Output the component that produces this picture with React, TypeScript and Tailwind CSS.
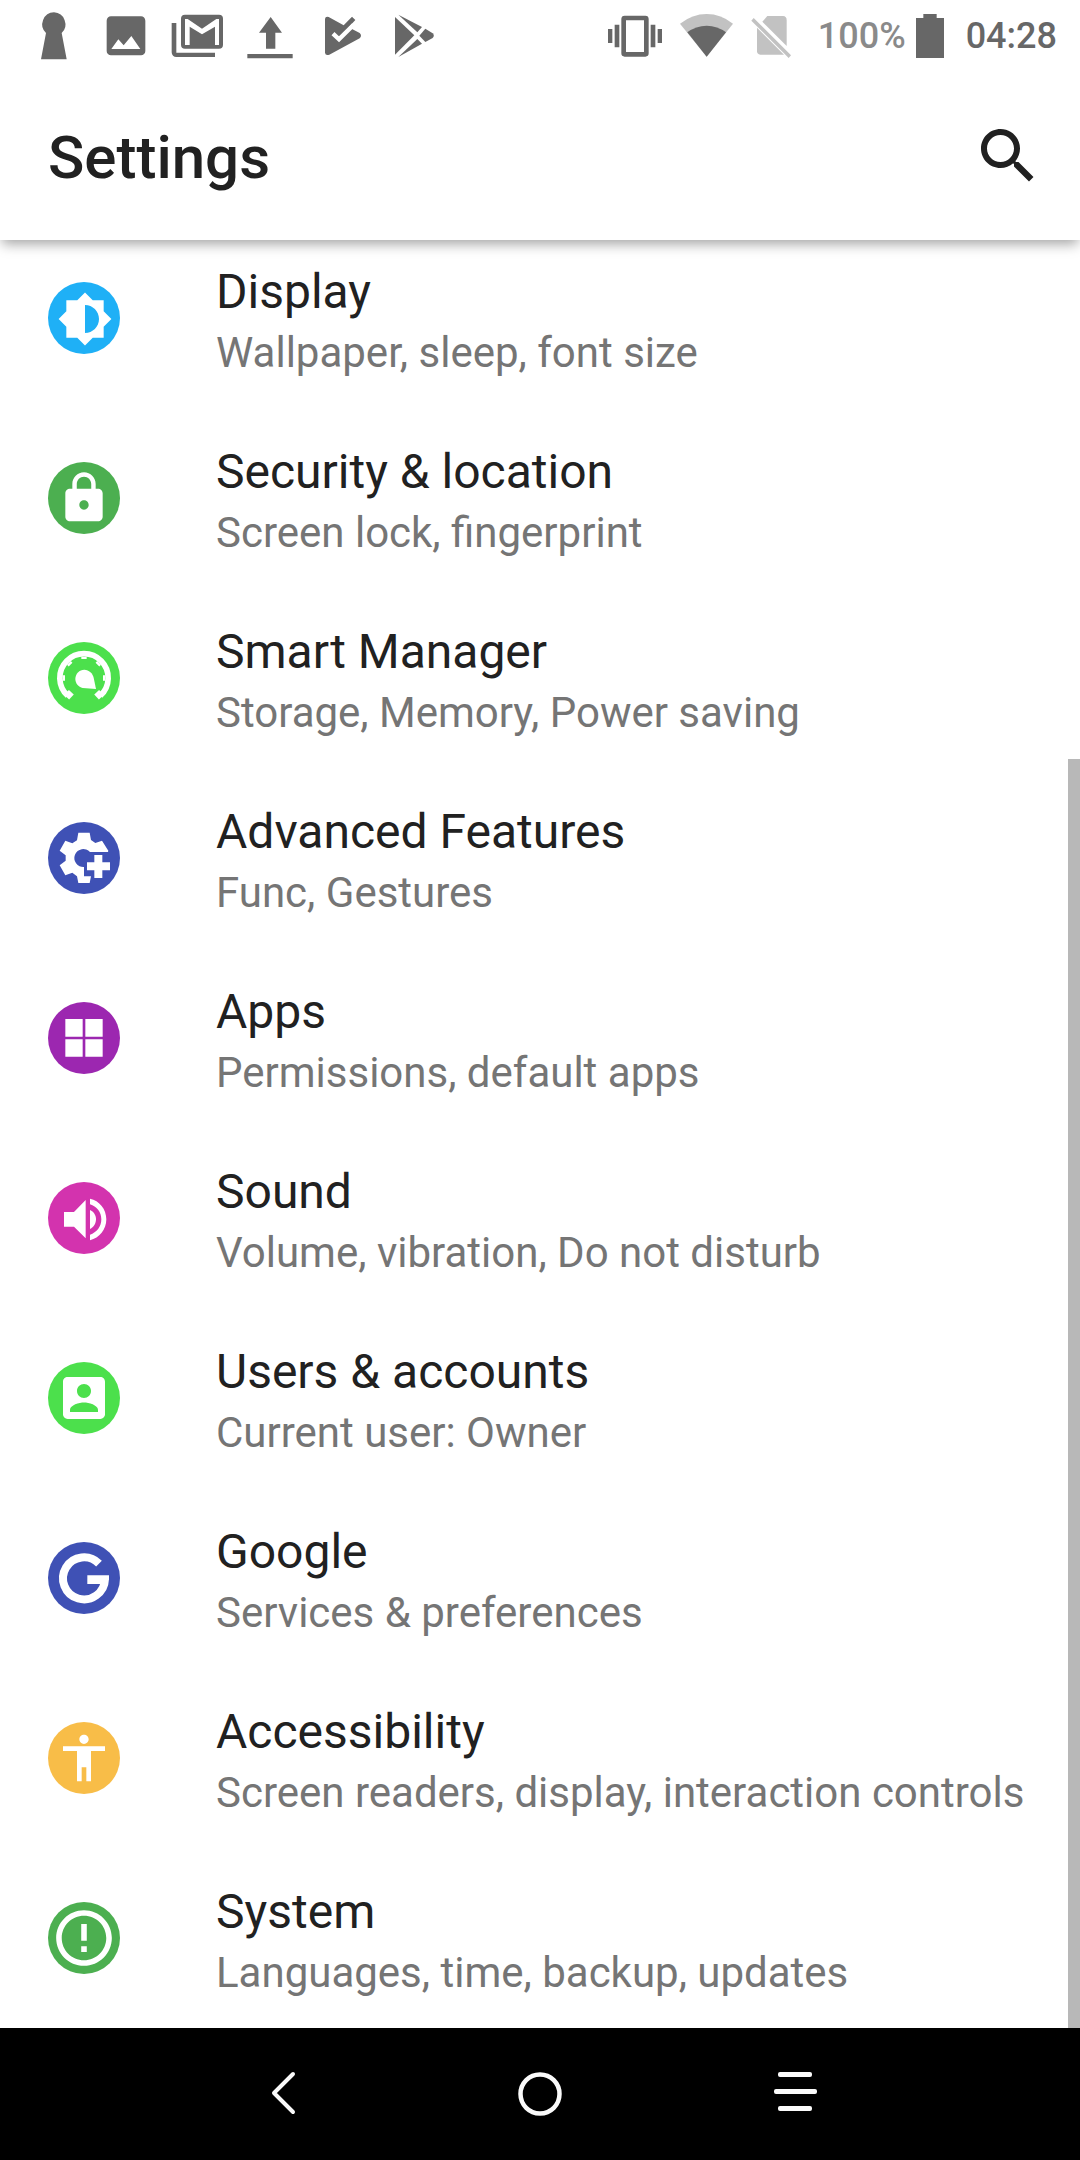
import type { ReactNode } from "react";

const BRIGHTNESS =
  "M20 15.31L23.31 12 20 8.69V4h-4.69L12 .69 8.69 4H4v4.69L.69 12 4 15.31V20h4.69L12 23.31 15.31 20H20v-4.69zM12 18V6c3.31 0 6 2.69 6 6s-2.69 6-6 6z";
const LOCK =
  "M18 8h-1V6c0-2.76-2.24-5-5-5S7 3.24 7 6v2H6c-1.1 0-2 .9-2 2v10c0 1.1.9 2 2 2h12c1.1 0 2-.9 2-2V10c0-1.1-.9-2-2-2zm-6 9c-1.1 0-2-.9-2-2s.9-2 2-2 2 .9 2 2-.9 2-2 2zm3.1-9H8.9V6c0-1.71 1.39-3.1 3.1-3.1 1.71 0 3.1 1.39 3.1 3.1v2z";
const ACCOUNT =
  "M3 5v14c0 1.1.89 2 2 2h14c1.1 0 2-.9 2-2V5c0-1.1-.9-2-2-2H5c-1.11 0-2 .9-2 2zm12 4c0 1.66-1.34 3-3 3s-3-1.34-3-3 1.34-3 3-3 3 1.34 3 3zm-9 8c0-2 4-3.1 6-3.1s6 1.1 6 3.1v1H6v-1z";
const PERSON =
  "M12 2c1.1 0 2 .9 2 2s-.9 2-2 2-2-.9-2-2 .9-2 2-2zm9 7h-6v13h-2v-6h-2v6H9V9H3V7h18v2z";
const ERROR =
  "M11 15h2v2h-2zm0-8h2v6h-2zm.99-5C6.47 2 2 6.48 2 12s4.47 10 9.99 10C17.52 22 22 17.52 22 12S17.52 2 11.99 2zM12 20c-4.42 0-8-3.58-8-8s3.58-8 8-8 8 3.58 8 8-3.58 8-8 8z";
const SEARCH =
  "M15.5 14h-.79l-.28-.27C15.41 12.59 16 11.11 16 9.5 16 5.91 13.09 3 9.5 3S3 5.91 3 9.5 5.91 16 9.5 16c1.61 0 3.09-.59 4.23-1.57l.27.28v.79l5 4.99L20.49 19l-4.99-5zm-6 0C7.01 14 5 11.99 5 9.5S7.01 5 9.5 5 14 7.01 14 9.5 11.99 14 9.5 14z";

type Item = { title: string; summary: string; color: string; glyph: ReactNode };

const items: Item[] = [
  {
    title: "Display",
    summary: "Wallpaper, sleep, font size",
    color: "#1fb0f6",
    glyph: <path transform="translate(27 27) scale(7)" d={BRIGHTNESS} />,
  },
  {
    title: "Security & location",
    summary: "Screen lock, fingerprint",
    color: "#4caf50",
    glyph: <path transform="translate(24 24) scale(7)" d={LOCK} />,
  },
  {
    title: "Smart Manager",
    summary: "Storage, Memory, Power saving",
    color: "#4ce04c",
    glyph: (
      <>
        <g fill="none" stroke="#fff">
          <path strokeWidth="17" d="M59 161A72.500 72.500 0 1 1 157 161" />
          <path
            strokeWidth="16"
            d="M108 44V51M44 108H51M172 108H165M62.700 62.700L67.700 67.700M153.300 62.700L148.300 67.700"
          />
          <path strokeWidth="20" d="M56 166L70 151" />
          <path strokeWidth="20" d="M160 166L146 151" />
        </g>
        <path d="M144 141L137 107C134 94 123 83 109 83C94 83 82 95 82 111C82 124 91 135 104 138Z" />
      </>
    ),
  },
  {
    title: "Advanced Features",
    summary: "Func, Gestures",
    color: "#3f51b5",
    glyph: (
      <>
        <path d="M91 32L125 32L129 54L142 63L162 56L181 86L180 90L126 90A27 27 0 1 0 108 135L108 163L129 163L125 183L91 183L87 163L73 152L52 160L35 130L53 116L53 100L35 86L52 56L73 64L87 55Z" />
        <path d="M139 99H163V121H186V145H163V168H139V145H117V121H139Z" />
      </>
    ),
  },
  {
    title: "Apps",
    summary: "Permissions, default apps",
    color: "#9c27b0",
    glyph: <path d="M52 51H104V104H52ZM112 51H164V104H112ZM52 112H104V164H52ZM112 112H164V164H112Z" />,
  },
  {
    title: "Sound",
    summary: "Volume, vibration, Do not disturb",
    color: "#d333ae",
    glyph: (
      <>
        <path d="M48 90H78L113 54V169L78 134H48Z" />
        <path d="M126 84C137 89 144 99 144 112S137 136 126 141Z" />
        <path d="M126 50C154 56 175 81 175 112S154 168 126 175V158C146 152 160 134 160 112S146 73 126 67Z" />
      </>
    ),
  },
  {
    title: "Users & accounts",
    summary: "Current user: Owner",
    color: "#4ce04c",
    glyph: <path transform="translate(24 24) scale(7)" d={ACCOUNT} />,
  },
  {
    title: "Google",
    summary: "Services & preferences",
    color: "#3f51b5",
    glyph: (
      <>
        <path fill="none" stroke="#fff" strokeWidth="24" d="M153 65A63 63 0 1 0 171 111" />
        <path d="M118 100H183V112L168 126H118Z" />
      </>
    ),
  },
  {
    title: "Accessibility",
    summary: "Screen readers, display, interaction controls",
    color: "#f8bd48",
    glyph: <path transform="translate(24 24) scale(7)" d={PERSON} />,
  },
  {
    title: "System",
    summary: "Languages, time, backup, updates",
    color: "#4caf50",
    glyph: <path transform="translate(7.800 7.800) scale(8.350)" d={ERROR} />,
  },
];

function Notification({ children }: { children: ReactNode }) {
  return (
    <svg viewBox="0 0 216 216" className="size-[72px] shrink-0 fill-[#676767]" aria-hidden="true">
      {children}
    </svg>
  );
}

function StatusBar() {
  return (
    <div className="flex h-[72px] items-center justify-between pr-[23px] pl-[18px] text-4xl font-medium text-[#676767]">
      <div className="flex">
        <Notification>
          <path d="M108 37A36 36 0 0 1 131 99L146 178H69L84 99A36 36 0 0 1 108 37Z" />
        </Notification>
        <Notification>
          <path
            fillRule="evenodd"
            d="M63 49H153A13 13 0 0 1 166 62V153A13 13 0 0 1 153 166H63A13 13 0 0 1 50 153V62A13 13 0 0 1 63 49ZM64 147H151L124 108L101 136L85 118Z"
          />
        </Notification>
        <Notification>
          <path d="M29 69H43V158H159V171H43A14 14 0 0 1 29 157Z" />
          <path
            fillRule="evenodd"
            d="M69 44H171A12 12 0 0 1 183 56V134A12 12 0 0 1 171 146H69A12 12 0 0 1 57 134V56A12 12 0 0 1 69 44ZM69 57V135H83V80L120 103L159 80V135H171V57H163L120 86L77 57Z"
          />
        </Notification>
        <Notification>
          <path d="M110 51L144 98H124V146H96V98H75ZM40 162H176V175H40Z" />
        </Notification>
        <Notification>
          <path d="M57 57Q58 48 68 51L113 76L138 50L148 60L128 82L161 99Q169 107 161 115L70 164Q58 168 57 158Z" />
          <path d="M81 101L99 118L143 74" fill="none" stroke="#fff" strokeWidth="13" />
        </Notification>
        <Notification>
          <path d="M51 51L109 106L51 164Z" />
          <path d="M61 44L132 81L118 97Z" />
          <path d="M142 86L164 100Q171 107 164 114L142 126L124 107Z" />
          <path d="M61 171L118 117L132 131Z" />
        </Notification>
      </div>

      <div className="flex items-center">
        <svg viewBox="84 0 162 216" className="h-[72px] w-[54px] fill-[#676767]" aria-hidden="true">
          <path
            fillRule="evenodd"
            d="M134 47H196A10 10 0 0 1 206 57V160A10 10 0 0 1 196 170H134A10 10 0 0 1 124 160V57A10 10 0 0 1 134 47ZM138 61V156H192V61Z"
          />
          <path d="M84 87H97V129H84ZM104 74H118V142H104ZM212 74H226V142H212ZM233 87H246V129H233Z" />
        </svg>
        <svg viewBox="300 0 159 216" className="ml-[18px] h-[72px] w-[53px]" aria-hidden="true">
          <path fill="#c2c2c2" d="M300 71Q337 42 380 42T459 71L380 170Z" />
          <path fill="#676767" d="M322 97Q348 77 380 77T438 97L380 170Z" />
        </svg>
        <svg viewBox="513 0 120 216" className="ml-[18px] h-[72px] w-10 fill-[#c2c2c2]" aria-hidden="true">
          <path d="M562 48H609Q620 49 620 60V138L547 65Z" />
          <path d="M531 83L612 164H541Q531 163 531 154Z" />
          <path d="M521 54L633 166L626 174L514 62Z" />
        </svg>
        <span className="ml-[27px] text-[#8a8a8a]">100%</span>
        <svg viewBox="1008 0 84 216" className="ml-[10px] h-[72px] w-7 fill-[#676767]" aria-hidden="true">
          <path d="M1030 42H1070V54H1092V174H1008V54H1030Z" />
        </svg>
        <span className="ml-[22px]">04:28</span>
      </div>
    </div>
  );
}

function SettingRow({ title, summary, color, glyph }: Item) {
  return (
    <li>
      <a href="#" className="flex h-[180px] pl-12">
        <svg viewBox="0 0 216 216" className="mt-[54px] size-[72px] shrink-0 fill-white" aria-hidden="true">
          <circle cx="108" cy="108" r="108" fill={color} />
          {glyph}
        </svg>
        <span className="ml-24 flex flex-col pt-[34px] whitespace-nowrap">
          <span className="text-5xl/[60px] text-[#212121]">{title}</span>
          <span className="text-[42px]/[62px] text-[#757575]">{summary}</span>
        </span>
      </a>
    </li>
  );
}

export default function App() {
  return (
    <div className="flex min-h-screen flex-col bg-white font-['Roboto',sans-serif]">
      <header className="relative z-10 bg-white shadow-[0_6px_12px_-2px_rgba(0,0,0,0.36)]">
        <StatusBar />
        <div className="flex h-[168px] items-center justify-between pr-9 pl-12">
          <h1 className="pt-1 text-6xl font-medium text-[#212121]">Settings</h1>
          <button type="button" aria-label="Search" className="size-[72px]">
            <svg viewBox="0 0 24 24" className="size-full fill-[#212121]" aria-hidden="true">
              <path d={SEARCH} />
            </svg>
          </button>
        </div>
      </header>

      <main className="relative flex-1 overflow-hidden">
        <ul className="-mt-3">
          {items.map((item) => (
            <SettingRow key={item.title} {...item} />
          ))}
        </ul>
        <div className="absolute top-[519px] right-0 bottom-0 w-3 bg-[#b8b8b8]" />
      </main>

      <nav className="flex h-[132px] justify-center bg-black">
        <button type="button" aria-label="Back" className="flex w-64 items-center justify-center">
          <svg viewBox="0 0 48 48" className="size-12 fill-none stroke-[#fafafa]" aria-hidden="true">
            <path d="M33 4L14 23L33 42" strokeWidth="4" strokeLinecap="round" strokeLinejoin="round" />
          </svg>
        </button>
        <button type="button" aria-label="Home" className="flex w-64 items-center justify-center">
          <svg viewBox="0 0 48 48" className="size-12 fill-none stroke-[#fafafa]" aria-hidden="true">
            <circle cx="24" cy="24" r="19.500" strokeWidth="4.500" />
          </svg>
        </button>
        <button type="button" aria-label="Recent apps" className="flex w-64 items-center justify-center">
          <svg viewBox="0 0 48 48" className="size-12 fill-[#fafafa]" aria-hidden="true">
            <rect x="6" y="2" width="34" height="5" rx="2" />
            <rect x="2" y="19" width="43" height="5" rx="2" />
            <rect x="6" y="36" width="34" height="5" rx="2" />
          </svg>
        </button>
      </nav>
    </div>
  );
}
